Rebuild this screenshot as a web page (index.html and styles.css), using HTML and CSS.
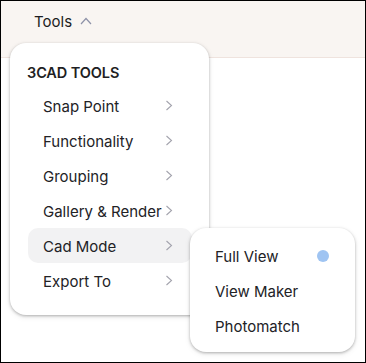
FILE: index.html
```html
<!DOCTYPE html>
<html>
<head>
<meta charset="utf-8">
<link rel="stylesheet" href="styles.css">
</head>
<body>
<div class="frame">
  <header class="topbar">
    <span class="topbar-title">Tools</span>
    <svg class="chev-up" width="12" height="8" viewBox="0 0 12 8"><path d="M1 7 L6 1.5 L11 7" fill="none" stroke="#8e92a8" stroke-width="1.2"/></svg>
  </header>

  <div class="menu">
    <div class="menu-heading">3CAD TOOLS</div>
    <div class="menu-item"><span>Snap Point</span><svg class="chev" width="8" height="11" viewBox="0 0 8 11"><path d="M1.5 1 L6.5 5.5 L1.5 10" fill="none" stroke="#a3a3ad" stroke-width="1.1"/></svg></div>
    <div class="menu-item"><span>Functionality</span><svg class="chev" width="8" height="11" viewBox="0 0 8 11"><path d="M1.5 1 L6.5 5.5 L1.5 10" fill="none" stroke="#a3a3ad" stroke-width="1.1"/></svg></div>
    <div class="menu-item"><span>Grouping</span><svg class="chev" width="8" height="11" viewBox="0 0 8 11"><path d="M1.5 1 L6.5 5.5 L1.5 10" fill="none" stroke="#a3a3ad" stroke-width="1.1"/></svg></div>
    <div class="menu-item"><span>Gallery &amp; Render</span><svg class="chev" width="8" height="11" viewBox="0 0 8 11"><path d="M1.5 1 L6.5 5.5 L1.5 10" fill="none" stroke="#a3a3ad" stroke-width="1.1"/></svg></div>
    <div class="menu-item active"><span>Cad Mode</span><svg class="chev" width="8" height="11" viewBox="0 0 8 11"><path d="M1.5 1 L6.5 5.5 L1.5 10" fill="none" stroke="#a3a3ad" stroke-width="1.1"/></svg></div>
    <div class="menu-item"><span>Export To</span><svg class="chev" width="8" height="11" viewBox="0 0 8 11"><path d="M1.5 1 L6.5 5.5 L1.5 10" fill="none" stroke="#a3a3ad" stroke-width="1.1"/></svg></div>
  </div>

  <div class="submenu">
    <div class="sub-item"><span>Full View</span><span class="dot"></span></div>
    <div class="sub-item"><span>View Maker</span></div>
    <div class="sub-item"><span>Photomatch</span></div>
  </div>
</div>
</body>
</html>
```

FILE: styles.css
```css
* { box-sizing: border-box; }
html, body { margin: 0; padding: 0; }
body {
  width: 366px;
  height: 363px;
  font-family: Inter, "Noto Sans", sans-serif;
  color: #222226;
}
.frame {
  position: relative;
  width: 366px;
  height: 363px;
  border: 1px solid #000;
  background: #fff;
  overflow: hidden;
}
.topbar {
  height: 57px;
  background: #f9f5f2;
  border-bottom: 1px solid #efe3de;
  display: flex;
  align-items: flex-start;
  padding: 11px 0 0 33px;
  gap: 8px;
}
.topbar-title {
  font-size: 15px;
  line-height: 20px;
  color: #1d1d22;
}
.chev-up { margin-top: 5px; }

.menu {
  position: absolute;
  left: 9px;
  top: 42px;
  width: 199px;
  height: 272px;
  background: #fff;
  border-radius: 16px;
  box-shadow: 0 1px 3px rgba(0,0,0,0.28), 0 2px 6px rgba(0,0,0,0.08);
  padding: 16px 17px 0 18px;
  display: flex;
  flex-direction: column;
}
.menu-heading {
  font-size: 14.5px;
  font-weight: 600;
  letter-spacing: -0.1px;
  line-height: 26px;
  padding-top: 1px;
  margin-left: -1px;
  margin-bottom: 2px;
  color: #1f1f24;
}
.menu-item {
  height: 35px;
  display: flex;
  align-items: center;
  justify-content: space-between;
  padding: 2px 19px 0 15px;
  font-size: 15px;
  border-radius: 10px;
}
.menu-item .chev { margin-top: -2px; }
.menu-item.active { background: #f2f2f3; }
.chev { flex: none; }

.submenu {
  position: absolute;
  left: 189px;
  top: 227px;
  width: 165px;
  height: 124px;
  background: #fff;
  border-radius: 16px;
  box-shadow: 0 1px 3px rgba(0,0,0,0.28), 0 2px 6px rgba(0,0,0,0.08);
  padding: 10px 25px 0 25px;
  display: flex;
  flex-direction: column;
}
.sub-item {
  height: 35px;
  display: flex;
  align-items: center;
  justify-content: space-between;
  padding-top: 2px;
  font-size: 15px;
}
.dot {
  width: 12px;
  height: 12px;
  border-radius: 50%;
  background: #9fc4f2;
  margin-right: 1px;
  margin-top: -2px;
}
```
